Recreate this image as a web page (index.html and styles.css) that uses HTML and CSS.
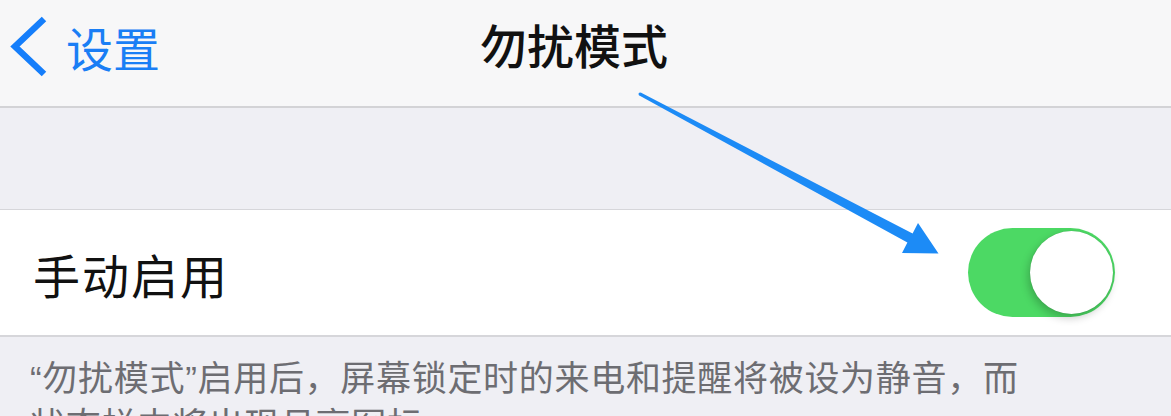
FILE: index.html
```html
<!DOCTYPE html>
<html lang="zh-CN">
  <head>
    <meta charset="UTF-8" />
    <meta name="viewport" content="width=device-width, initial-scale=1.0" />
    <title>勿扰模式</title>
    <link rel="stylesheet" href="styles.css">
  </head>
  <body>
    <div class="screen">
      <header class="nav-bar">
        <a class="nav-back" href="#">
          <svg class="chevron" width="44" height="64" viewBox="0 0 44 64">
            <polyline points="36,5 7,32.5 36,60" fill="none" stroke="#157efb" stroke-width="6.5" stroke-linejoin="miter" />
          </svg>
          <span>设置</span>
        </a>
        <h1 class="nav-title">勿扰模式</h1>
        <span></span>
      </header>

      <div class="group-gap"></div>

      <ul class="table-group">
        <li class="table-row">
          <span class="row-label">手动启用</span>
          <span class="switch is-on"><span class="switch-knob"></span></span>
        </li>
      </ul>

      <p class="group-footer">“勿扰模式”启用后，屏幕锁定时的来电和提醒将被设为静音，而状态栏中将出现月亮图标。</p>

      <svg class="callout-arrow" width="1171" height="416" viewBox="0 0 1171 416">
        <defs>
          <filter id="soft" x="-5%" y="-5%" width="110%" height="110%">
            <feGaussianBlur stdDeviation="0.6" />
          </filter>
        </defs>
        <polygon filter="url(#soft)" fill="#1f8bf6"
          points="640.7,92.6 912.6,233.4 918,223 938.5,253.5 902,253 907.4,242.6 639.3,95.4" />
        <circle cx="640" cy="94" r="1.5" fill="#1f8bf6" />
      </svg>
    </div>
  </body>
</html>
```

FILE: styles.css
```css
body {
  margin: 0;
  font-family: "Noto Sans CJK SC", "Liberation Sans", sans-serif;
  background-color: #efeff4;
  overflow: hidden;
}
.screen {
  position: relative;
  width: 1171px;
  height: 416px;
  overflow: hidden;
}
.nav-bar {
  display: grid;
  grid-template-columns: 1fr auto 1fr;
  align-items: start;
  height: 108px;
  padding-top: 16px;
  box-sizing: border-box;
  background-color: #f7f7f8;
  border-bottom: 2px solid #d3d3d6;
}
.nav-back {
  display: flex;
  align-items: center;
  gap: 14px;
  padding-left: 8px;
  color: #1a7ef5;
  text-decoration: none;
  font-size: 47px;
  line-height: 56px;
}
.chevron {
  display: block;
  margin-top: -2px;
}
.nav-title {
  margin: 0 23px 0 0;
  font-size: 47px;
  line-height: 56px;
  font-weight: 500;
  color: #111;
}
.group-gap {
  height: 101px;
}
.table-group {
  margin: 0;
  padding: 0;
  list-style: none;
  background-color: #fff;
  border-top: 1px solid #d6d6da;
  border-bottom: 2px solid #d6d6da;
}
.table-row {
  display: flex;
  align-items: center;
  justify-content: space-between;
  height: 125px;
  padding: 0 56px 0 33px;
}
.row-label {
  font-size: 47px;
  letter-spacing: 2px;
  color: #111;
  padding-top: 2px;
}
.switch {
  display: flex;
  justify-content: flex-end;
  align-items: center;
  width: 147px;
  height: 89px;
  padding: 0 2px;
  box-sizing: border-box;
  border-radius: 45px;
  background-color: #4cd964;
}
.switch-knob {
  width: 83px;
  height: 83px;
  border-radius: 50%;
  background-color: #fff;
  box-shadow: -2px 4px 8px rgba(0, 0, 0, 0.22), 0 0 1px rgba(0, 0, 0, 0.2);
}
.group-footer {
  margin: 0;
  width: 1010px;
  padding: 18px 0 0 30px;
  font-family: "Liberation Sans", "Noto Sans CJK SC", sans-serif;
  font-size: 35px;
  line-height: 47px;
  letter-spacing: 0.7px;
  color: #6d6d72;
}
.callout-arrow {
  position: absolute;
  left: 0;
  top: 0;
  pointer-events: none;
}
```
